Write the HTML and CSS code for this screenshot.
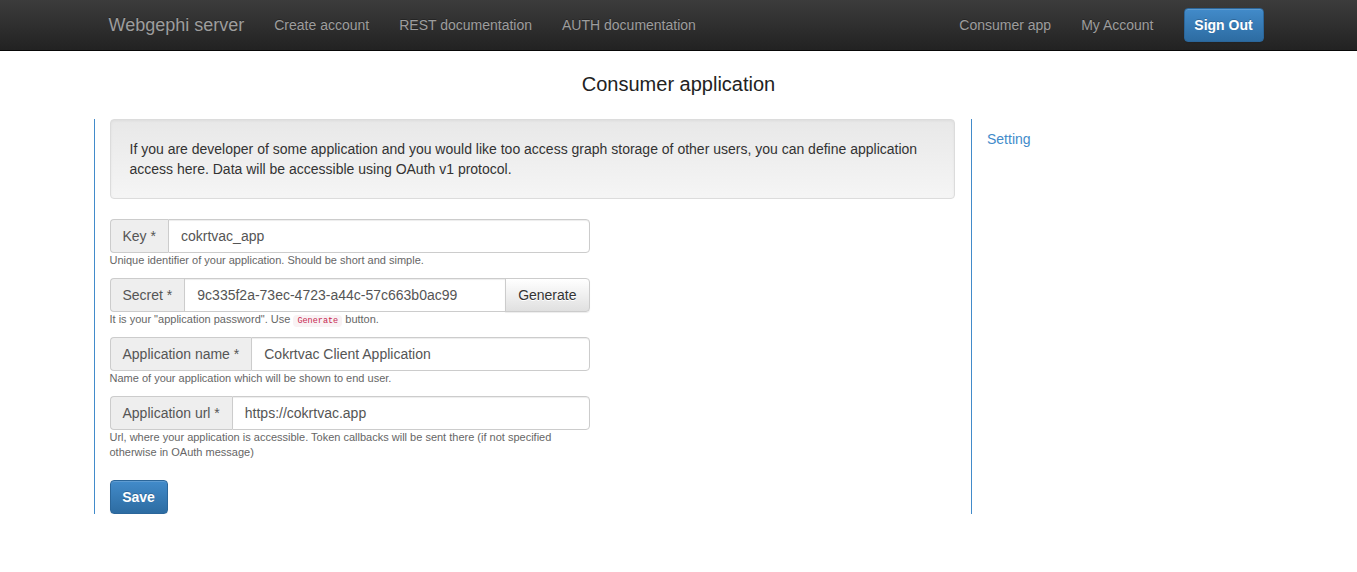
FILE: index.html
```html
<!DOCTYPE html>
<html lang="en">
<head>
<meta charset="utf-8">
<title>Consumer application</title>
<link rel="stylesheet" href="styles.css">
</head>
<body>
<nav class="navbar">
  <div class="navbar-inner">
    <a class="brand" href="#">Webgephi server</a>
    <ul class="nav">
      <li><a href="#">Create account</a></li>
      <li><a href="#">REST documentation</a></li>
      <li><a href="#">AUTH documentation</a></li>
    </ul>
    <ul class="nav nav-right">
      <li><a href="#">Consumer app</a></li>
      <li><a href="#">My Account</a></li>
      <li><button class="btn btn-primary btn-nav" type="button">Sign Out</button></li>
    </ul>
  </div>
</nav>

<h1 class="page-title">Consumer application</h1>

<div class="container">
  <div class="row">
    <div class="col-main">
      <div class="well">If you are developer of some application and you would like too access graph storage of other users, you can define application access here. Data will be accessible using OAuth v1 protocol.</div>

      <form class="form">
        <div class="form-group">
          <div class="input-group">
            <span class="addon">Key *</span>
            <input class="input" type="text" value="cokrtvac_app">
          </div>
          <p class="help">Unique identifier of your application. Should be short and simple.</p>
        </div>

        <div class="form-group">
          <div class="input-group">
            <span class="addon">Secret *</span>
            <input class="input input-mid" type="text" value="9c335f2a-73ec-4723-a44c-57c663b0ac99">
            <button class="btn btn-default btn-addon" type="button">Generate</button>
          </div>
          <p class="help">It is your "application password". Use <code class="code">Generate</code> button.</p>
        </div>

        <div class="form-group">
          <div class="input-group">
            <span class="addon">Application name *</span>
            <input class="input" type="text" value="Cokrtvac Client Application">
          </div>
          <p class="help">Name of your application which will be shown to end user.</p>
        </div>

        <div class="form-group">
          <div class="input-group">
            <span class="addon">Application url *</span>
            <input class="input" type="text" value="https://cokrtvac.app">
          </div>
          <p class="help">Url, where your application is accessible. Token callbacks will be sent there (if not specified otherwise in OAuth message)</p>
        </div>

        <button class="btn btn-primary btn-save" type="button">Save</button>
      </form>
    </div>
    <div class="col-side">
      <a class="side-link" href="#">Setting</a>
    </div>
  </div>
</div>
</body>
</html>
```

FILE: styles.css
```css
* { box-sizing: border-box; }

html, body {
  margin: 0;
  padding: 0;
  background: #fff;
  font-family: "Liberation Sans", Arial, Helvetica, sans-serif;
  font-size: 14px;
  line-height: 20px;
  color: #333;
}

a { text-decoration: none; }

/* navbar */
.navbar {
  height: 51px;
  background: linear-gradient(to bottom, #3c3c3c 0, #222 100%);
  border-bottom: 1px solid #080808;
}

.navbar-inner {
  width: 1170px;
  margin: 0 auto;
  padding: 0 15px;
  display: flex;
  align-items: flex-start;
}

.brand {
  margin-left: -15px;
  padding: 15px;
  font-size: 18px;
  line-height: 20px;
  color: #9d9d9d;
  text-shadow: 0 -1px 0 rgba(0, 0, 0, .25);
}

.nav {
  list-style: none;
  margin: 0;
  padding: 0;
  display: flex;
  align-items: flex-start;
}

.nav a {
  display: block;
  padding: 15px;
  line-height: 20px;
  color: #9d9d9d;
  text-shadow: 0 -1px 0 rgba(0, 0, 0, .25);
}

.nav-right {
  margin-left: auto;
  margin-right: -15px;
}

/* buttons */
.btn {
  font-family: inherit;
  font-size: 14px;
  line-height: 20px;
  border-radius: 4px;
  cursor: pointer;
}

.btn-primary {
  color: #fff;
  font-weight: bold;
  background: linear-gradient(to bottom, #428bca 0, #2d6ca2 100%);
  border: 1px solid #2b669a;
  text-shadow: 0 -1px 0 rgba(0, 0, 0, .2);
  box-shadow: inset 0 1px 0 rgba(255, 255, 255, .15), 0 1px 1px rgba(0, 0, 0, .075);
}

.btn-nav {
  margin: 8px 0 0 15px;
  height: 34px;
  width: 80px;
  padding: 6px 0;
}

.btn-save {
  height: 34px;
  width: 58px;
  padding: 6px 0;
  margin-top: 10px;
}

.btn-default {
  color: #333;
  background: linear-gradient(to bottom, #fff 0, #e0e0e0 100%);
  border: 1px solid #ccc;
  text-shadow: 0 1px 0 #fff;
  box-shadow: inset 0 1px 0 rgba(255, 255, 255, .15), 0 1px 1px rgba(0, 0, 0, .075);
}

/* title */
.page-title {
  margin: 22px 0 24px;
  text-align: center;
  font-size: 20px;
  line-height: 22px;
  font-weight: normal;
  color: #222;
}

/* layout */
.container {
  width: 1170px;
  margin: 0 auto;
  padding: 0 15px;
}

.row {
  display: flex;
  margin: 0 -15px;
}

.col-main {
  width: 75%;
  padding: 0 16px 0 15px;
  border-left: 1px solid #428bca;
}

.col-side {
  width: 25%;
  border-left: 1px solid #428bca;
}

.side-link {
  display: block;
  padding: 10px 15px;
  color: #428bca;
}

/* well */
.well {
  padding: 19px;
  margin-bottom: 20px;
  background: linear-gradient(to bottom, #e8e8e8 0, #f5f5f5 100%);
  border: 1px solid #dcdcdc;
  border-radius: 4px;
  box-shadow: inset 0 1px 3px rgba(0, 0, 0, .05), 0 1px 0 rgba(255, 255, 255, .1);
}

/* form */
.form { margin: 0; }

.form-group { margin-bottom: 10px; }

.input-group {
  display: flex;
  width: 480px;
  height: 34px;
}

.addon {
  padding: 6px 12px;
  font-size: 14px;
  line-height: 20px;
  color: #555;
  background: #eee;
  border: 1px solid #ccc;
  border-right: 0;
  border-radius: 4px 0 0 4px;
  white-space: nowrap;
}

.input {
  flex: 1;
  min-width: 0;
  height: 34px;
  padding: 6px 12px;
  font-family: inherit;
  font-size: 14px;
  line-height: 20px;
  color: #555;
  background: #fff;
  border: 1px solid #ccc;
  border-radius: 0 4px 4px 0;
  box-shadow: inset 0 1px 1px rgba(0, 0, 0, .075);
  outline: none;
}

.input-mid { border-radius: 0; }

.btn-addon {
  height: 34px;
  padding: 6px 12px;
  margin-left: -1px;
  border-radius: 0 4px 4px 0;
  font-weight: normal;
}

.help {
  margin: 0;
  width: 480px;
  font-size: 11px;
  line-height: 15px;
  color: #666;
}

.code {
  padding: 1px 4px;
  font-family: "Liberation Mono", "DejaVu Sans Mono", monospace;
  font-size: 8.5px;
  line-height: 1;
  color: #c7254e;
  background: #f9f2f4;
  border-radius: 4px;
}
```
